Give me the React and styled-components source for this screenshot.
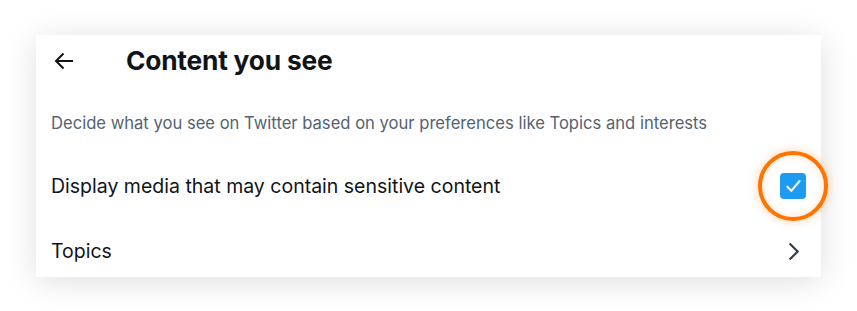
import React from "react";
import styled, { createGlobalStyle } from "styled-components";

const Global = createGlobalStyle`
  html, body { margin: 0; padding: 0; background: #ffffff; }
  body { font-family: Inter, "Noto Sans", sans-serif; -webkit-font-smoothing: antialiased; }
`;

const Page = styled.div`
  width: 857px;
  height: 311px;
  box-sizing: border-box;
  padding: 35px 36px 34px 36px;
  background: #ffffff;
`;

const Card = styled.section`
  position: relative;
  width: 785px;
  height: 242px;
  background: #ffffff;
  box-shadow: 0 4px 30px rgba(0, 0, 0, 0.13);
  display: flex;
  flex-direction: column;
`;

const Header = styled.header`
  height: 52px;
  display: flex;
  align-items: center;
  padding: 0 0 0 18px;
`;

const BackButton = styled.button`
  border: 0;
  background: none;
  padding: 0;
  width: 72px;
  height: 40px;
  display: flex;
  align-items: center;
  justify-content: flex-start;
  color: #0f1419;
  cursor: pointer;
`;

const Title = styled.h1`
  margin: 0;
  font-size: 26.3px;
  font-weight: 700;
  letter-spacing: -0.2px;
  color: #0f1419;
  line-height: 32px;
`;

const Description = styled.p`
  margin: 0;
  padding: 24px 15px 11px 15px;
  font-size: 16.6px;
  line-height: 24px;
  color: #536471;
`;

const Row = styled.div`
  height: ${(p) => p.$h}px;
  display: flex;
  align-items: center;
  justify-content: space-between;
  padding: 0 15px;
  font-size: 19.5px;
  line-height: 26px;
  color: #0f1419;
`;

const CheckWrap = styled.div`
  position: relative;
  width: 26px;
  height: 26px;
  display: flex;
  align-items: center;
  justify-content: center;
`;

const Highlight = styled.div`
  position: absolute;
  left: 50%;
  top: 50%;
  width: 62px;
  height: 62px;
  margin-left: -35px;
  margin-top: -35px;
  border-radius: 50%;
  border: 4px solid #ff7300;
  background: #ffffff;
  box-shadow: 0 0 10px rgba(255, 115, 0, 0.35), inset 0 0 8px rgba(255, 115, 0, 0.2);
`;

const Checkbox = styled.div`
  position: relative;
  width: 26px;
  height: 26px;
  border-radius: 4px;
  background: #1d9bf0;
  display: flex;
  align-items: center;
  justify-content: center;
`;

const Chevron = styled.svg`
  width: 25px;
  height: 25px;
  color: #2f3a45;
`;

export default function App() {
  return (
    <>
      <Global />
      <Page>
        <Card>
          <Header>
            <BackButton aria-label="Back">
              <svg width="20" height="18" viewBox="0 0 20 18" fill="none">
                <path d="M19 9H2M9.5 1.5L2 9l7.5 7.5" stroke="#0f1419" strokeWidth="2" />
              </svg>
            </BackButton>
            <Title>Content you see</Title>
          </Header>
          <Description>
            Decide what you see on Twitter based on your preferences like Topics and interests
          </Description>
          <Row $h={79}>
            <span>Display media that may contain sensitive content</span>
            <CheckWrap>
              <Highlight />
              <Checkbox>
                <svg width="26" height="26" viewBox="0 0 26 26" fill="none">
                  <path d="M7.3 13.6l4 4.2L19.6 8" stroke="#ffffff" strokeWidth="2" strokeLinecap="round" strokeLinejoin="round" />
                </svg>
              </Checkbox>
            </CheckWrap>
          </Row>
          <Row $h={52}>
            <span>Topics</span>
            <Chevron viewBox="0 0 24 24" fill="currentColor">
              <path d="M14.586 12L7.543 4.96l1.414-1.42L17.414 12l-8.457 8.46-1.414-1.42L14.586 12z" />
            </Chevron>
          </Row>
        </Card>
      </Page>
    </>
  );
}
